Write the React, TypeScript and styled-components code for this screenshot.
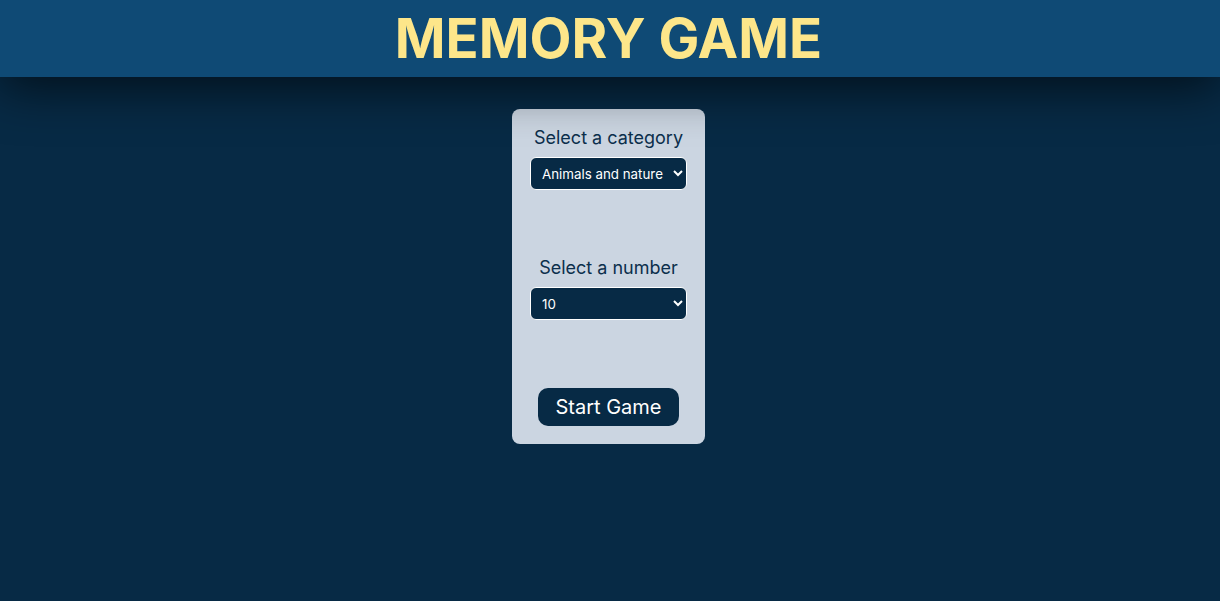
import React from "react";
import styled, { createGlobalStyle } from "styled-components";

const GlobalStyle = createGlobalStyle`
  html, body {
    margin: 0;
    padding: 0;
    background: #072a45;
    font-family: Inter, "Noto Sans", sans-serif;
  }
  * { box-sizing: border-box; }
`;

const Page = styled.div`
  min-height: 601px;
  padding-right: 3px;
  background: #072a45;
  display: flex;
  flex-direction: column;
  align-items: center;
`;

const Header = styled.header`
  position: relative;
  z-index: 2;
  width: calc(100% + 3px);
  margin-right: -3px;
  height: 77px;
  padding-right: 3px;
  background: #0f4a75;
  box-shadow: 0 10px 50px rgba(0, 0, 0, 0.65);
  display: flex;
  align-items: center;
  justify-content: center;
`;

const Title = styled.h1`
  margin: 0;
  font-family: Inter, "Noto Sans", sans-serif;
  font-weight: 700;
  font-size: 54.5px;
  line-height: 1;
  color: #fde68a;
`;

const Card = styled.form`
  position: relative;
  z-index: 1;
  margin-top: 32px;
  width: 193px;
  padding: 18px 18px;
  background: #cbd5e1;
  border-radius: 8px;
  display: flex;
  flex-direction: column;
  align-items: center;
`;

const Field = styled.div<{ $gapAfter: number }>`
  width: 100%;
  display: flex;
  flex-direction: column;
  align-items: center;
  gap: 8px;
  margin-bottom: ${(p) => p.$gapAfter}px;
`;

const Label = styled.label`
  font-size: 18px;
  line-height: 22px;
  color: #0c2f4c;
`;

const Select = styled.select`
  width: 157px;
  height: 33px;
  padding: 0 6px 0 7px;
  background: #072a45;
  color: #ffffff;
  border: 1px solid #ffffff;
  border-radius: 6px;
  font-family: Inter, "Noto Sans", sans-serif;
  font-size: 13.33px;
`;

const StartButton = styled.button`
  width: 141px;
  height: 38px;
  border: none;
  border-radius: 10px;
  background: #072a45;
  color: #ffffff;
  font-family: Inter, "Noto Sans", sans-serif;
  font-size: 20px;
  cursor: pointer;
`;

export default function App() {
  return (
    <>
      <GlobalStyle />
      <Page>
        <Header>
          <Title>MEMORY GAME</Title>
        </Header>
        <Card onSubmit={(e) => e.preventDefault()}>
          <Field $gapAfter={67}>
            <Label htmlFor="category">Select a category</Label>
            <Select id="category" defaultValue="animals">
              <option value="animals">Animals and nature</option>
              <option value="food">Food and drink</option>
              <option value="travel">Travel and places</option>
            </Select>
          </Field>
          <Field $gapAfter={68}>
            <Label htmlFor="number">Select a number</Label>
            <Select id="number" defaultValue="10">
              <option value="10">10</option>
              <option value="20">20</option>
              <option value="30">30</option>
            </Select>
          </Field>
          <StartButton type="submit">Start Game</StartButton>
        </Card>
      </Page>
    </>
  );
}
